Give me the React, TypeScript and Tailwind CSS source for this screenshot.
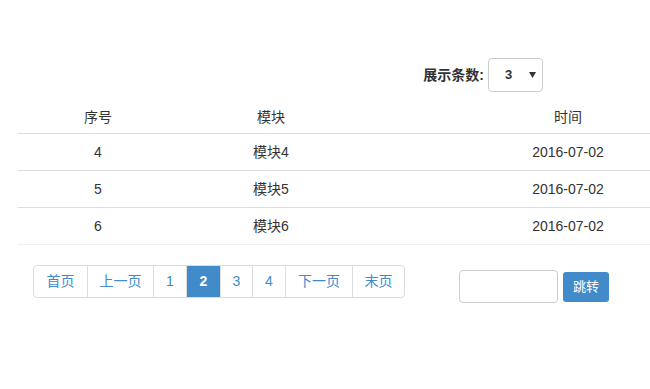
import React from "react";

const font = { fontFamily: '"Liberation Sans", Arial, "Noto Sans CJK SC", sans-serif' };

export default function App() {
  const rows = [
    ["4", "模块4", "2016-07-02"],
    ["5", "模块5", "2016-07-02"],
    ["6", "模块6", "2016-07-02"],
  ];
  const pages: { label: string; w: string; active?: boolean }[] = [
    { label: "首页", w: "w-[53px]" },
    { label: "上一页", w: "w-[66px]" },
    { label: "1", w: "w-[33px]" },
    { label: "2", w: "w-[34px]", active: true },
    { label: "3", w: "w-[32px]" },
    { label: "4", w: "w-[33px]" },
    { label: "下一页", w: "w-[67px]" },
    { label: "末页", w: "w-[52px]" },
  ];
  return (
    <div className="w-[650px] h-[389px] bg-white overflow-hidden text-[14px] text-[#333]" style={font}>
      <div className="pt-[58px] pr-[107px] flex justify-end items-center">
        <span className="font-bold text-[14px] mr-[4px]">展示条数:</span>
        <div className="w-[55px] h-[34px] border border-[#ccc] rounded-[4px] flex items-center pl-[16px] pr-[6px]">
          <span className="font-bold text-[13px] flex-1">3</span>
          <svg width="7" height="6" viewBox="0 0 7 6"><path d="M0 0 L7 0 L3.5 6 Z" fill="#333" /></svg>
        </div>
      </div>
      <div className="ml-[18px] mt-[9px] w-[632px]">
        <div className="grid grid-cols-[160px_186px_122px_164px] h-[33px] items-center border-b border-[#ddd]">
          <div className="text-center">序号</div>
          <div className="text-center">模块</div>
          <div></div>
          <div className="text-center">时间</div>
        </div>
        {rows.map((r, i) => (
          <div
            key={i}
            className={`grid grid-cols-[160px_186px_122px_164px] h-[37px] items-center border-b ${i === 2 ? "border-[#f0f0f0]" : "border-[#ddd]"}`}
          >
            <div className="text-center">{r[0]}</div>
            <div className="text-center">{r[1]}</div>
            <div></div>
            <div className="text-center">{r[2]}</div>
          </div>
        ))}
      </div>
      <div className="flex items-start mt-[20px] ml-[33px]">
        <div className="flex h-[33px] border border-[#ddd] rounded-[4px] overflow-hidden">
          {pages.map((p, i) => (
            <div
              key={i}
              className={`${p.w} h-full flex items-center justify-center ${i > 0 ? "border-l border-[#ddd]" : ""} ${p.active ? "bg-[#428bca] text-white font-bold border-[#428bca]" : "text-[#428bca]"}`}
            >
              {p.label}
            </div>
          ))}
        </div>
        <div className="ml-[54px] mt-[5px] w-[99px] h-[33px] border border-[#ccc] rounded-[4px]"></div>
        <div className="ml-[5px] mt-[7px] w-[46px] h-[30px] bg-[#428bca] rounded-[3px] text-white text-[13px] flex items-center justify-center">
          跳转
        </div>
      </div>
    </div>
  );
}
